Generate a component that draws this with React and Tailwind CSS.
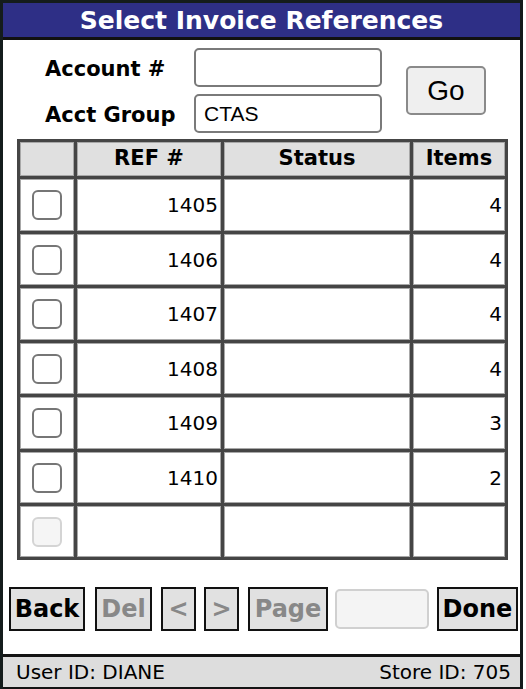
import React from "react";

const rows = [
  { ref: "1405", items: "4", h: "h-[52px]" },
  { ref: "1406", items: "4", h: "h-[51px]" },
  { ref: "1407", items: "4", h: "h-[52px]" },
  { ref: "1408", items: "4", h: "h-[51px]" },
  { ref: "1409", items: "3", h: "h-[52px]" },
  { ref: "1410", items: "2", h: "h-[51px]" },
];

const V = { fontFamily: '"DejaVu Sans", Verdana, sans-serif' };
const A = { fontFamily: '"Liberation Sans", Arial, sans-serif' };

function Cell({ children, className = "" }) {
  return (
    <div className={"bg-white border border-[#a8a8a8] flex items-center " + className}>
      {children}
    </div>
  );
}

function Box({ disabled }) {
  return (
    <div
      className={
        "w-[30px] h-[30px] rounded-[6px] border-2 " +
        (disabled ? "border-[#d4d4d4] bg-[#f5f5f5]" : "border-[#767676] bg-white")
      }
    />
  );
}

function Btn({ children, dim, className = "" }) {
  return (
    <div
      className={
        "h-[44px] border-2 border-[#111] bg-[#e1e1e1] flex items-center justify-center font-bold text-[24px] " +
        (dim ? "text-[#888] " : "text-black ") +
        className
      }
      style={V}
    >
      {children}
    </div>
  );
}

export default function App() {
  return (
    <div className="w-[526px] h-[689px] bg-white overflow-hidden">
      <div className="w-[523px] h-[689px] border-l-[3px] border-r-[3px] border-t-[3px] border-[#141c1c] flex flex-col">
        <div
          className="h-[37px] bg-[#2e2f86] border-b-[3px] border-[#111] flex items-center justify-center text-white font-bold text-[25px] leading-none"
          style={V}
        >
          Select Invoice References
        </div>

        <div className="flex flex-1 flex-col">
          {/* form */}
          <div className="flex items-center mt-[8px]">
            <div className="flex flex-col">
              <div className="flex items-center h-[39px]">
                <div className="w-[191px] pl-[42px] pt-[5px] font-bold text-[21px] text-black whitespace-nowrap" style={V}>
                  Account #
                </div>
                <div className="w-[188px] h-[39px] rounded-[5px] border-2 border-[#7a7a7a] bg-white" />
              </div>
              <div className="flex items-center h-[39px] mt-[7px]">
                <div className="w-[191px] pl-[42px] pt-[5px] font-bold text-[21px] text-black whitespace-nowrap" style={V}>
                  Acct Group
                </div>
                <div
                  className="w-[188px] h-[39px] rounded-[5px] border-2 border-[#7a7a7a] bg-white flex items-center pl-[8px] text-[21px] text-black"
                  style={A}
                >
                  CTAS
                </div>
              </div>
            </div>
            <div
              className="ml-[24px] w-[80px] h-[49px] rounded-[5px] border-2 border-[#8a8a8a] bg-[#efefef] flex items-center justify-center text-[28px] text-black"
              style={A}
            >
              Go
            </div>
          </div>

          {/* table */}
          <div
            className="ml-[14px] mt-[6px] w-[491px] bg-[#454545] p-[3px] grid gap-[3px] grid-cols-[54px_144px_186px_92px]"
            style={V}
          >
            <div className="h-[34px] bg-[#e0e0e0] border border-[#a8a8a8]" />
            <div className="h-[34px] bg-[#e0e0e0] border border-[#a8a8a8] flex items-center justify-center font-bold text-[21px] text-black">
              REF #
            </div>
            <div className="h-[34px] bg-[#e0e0e0] border border-[#a8a8a8] flex items-center justify-center font-bold text-[21px] text-black">
              Status
            </div>
            <div className="h-[34px] bg-[#e0e0e0] border border-[#a8a8a8] flex items-center justify-center font-bold text-[21px] text-black">
              Items
            </div>
            {rows.map((r) => (
              <React.Fragment key={r.ref}>
                <Cell className={r.h + " justify-center"}>
                  <Box />
                </Cell>
                <Cell className={r.h + " justify-end pr-[2px] text-[20px] text-black"}>{r.ref}</Cell>
                <Cell className={r.h} />
                <Cell className={r.h + " justify-end pr-[2px] text-[20px] text-black"}>{r.items}</Cell>
              </React.Fragment>
            ))}
            <Cell className="h-[51px] justify-center">
              <Box disabled />
            </Cell>
            <Cell className="h-[51px]" />
            <Cell className="h-[51px]" />
            <Cell className="h-[51px]" />
          </div>

          {/* buttons */}
          <div className="flex items-center mt-[27px] ml-[6px]">
            <Btn className="w-[76px]">Back</Btn>
            <Btn dim className="w-[57px] ml-[10px]">Del</Btn>
            <Btn dim className="w-[35px] ml-[9px]">&lt;</Btn>
            <Btn dim className="w-[35px] ml-[8px]">&gt;</Btn>
            <Btn dim className="w-[80px] ml-[9px]">Page</Btn>
            <div className="w-[94px] h-[40px] ml-[7px] rounded-[5px] border-2 border-[#d0d0d0] bg-[#f4f4f4]" />
            <Btn className="w-[81px] ml-[8px]">Done</Btn>
          </div>
        </div>

        <div
          className="h-[35px] bg-[#dddddd] border-t-[3px] border-b-[2px] border-[#141414] flex items-center justify-between pl-[13px] pr-[9px] text-[20px] text-black"
          style={V}
        >
          <span>User ID: DIANE</span>
          <span>Store ID: 705</span>
        </div>
      </div>
    </div>
  );
}
